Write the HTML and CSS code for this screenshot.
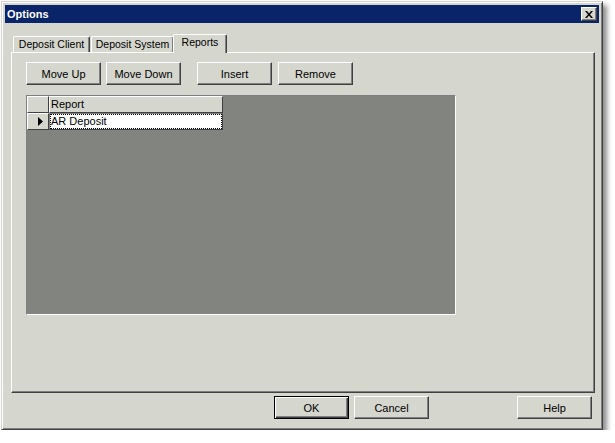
FILE: index.html
```html
<!DOCTYPE html>
<html lang="en">
<head>
    <meta charset="UTF-8">
    <title>Options</title>
    <link rel="stylesheet" href="styles.css">
</head>
<body>
    <div class="window">
        <div class="titlebar">
            <span class="title">Options</span>
            <div class="close-btn">
                <svg width="8" height="7" viewBox="0 0 8 7">
                    <path d="M0 0h2l2 2.5L6 0h2L5 3.5 8 7H6L4 4.5 2 7H0l3-3.5z" fill="#000"/>
                </svg>
            </div>
        </div>
        <div class="content">
            <div class="tabs">
                <div class="tab tab-client">Deposit Client</div>
                <div class="tab tab-system">Deposit System</div>
                <div class="tab tab-reports active">Reports</div>
            </div>
            <div class="panel">
                <div class="toolbar">
                    <button class="btn">Move Up</button>
                    <button class="btn">Move Down</button>
                    <button class="btn btn-insert">Insert</button>
                    <button class="btn btn-remove">Remove</button>
                </div>
                <div class="grid-area">
                    <div class="grid-table">
                        <div class="cell head"></div>
                        <div class="cell head">Report</div>
                        <div class="cell indicator">
                            <svg width="5" height="9" viewBox="0 0 5 9"><path d="M0 0l5 4.5L0 9z" fill="#000"/></svg>
                        </div>
                        <div class="cell data"><span class="focus">AR Deposit</span></div>
                    </div>
                </div>
            </div>
            <div class="footer">
                <button class="btn btn-default">OK</button>
                <button class="btn">Cancel</button>
                <button class="btn btn-help">Help</button>
            </div>
        </div>
    </div>
</body>
</html>
```

FILE: styles.css
```css
*{
    margin: 0;
    padding: 0;
    box-sizing: border-box;
}
body{
    background-color: #ffffff;
    font-family: "Liberation Sans", Arial, sans-serif;
    font-size: 11px;
    color: #000000;
}
.window{
    margin: 1px 0 0 1px;
    width: 602px;
    height: 429px;
    padding: 3px;
    background-color: #d5d6cd;
    border: 1px solid;
    border-color: #d5d6cd #404040 #404040 #d5d6cd;
    box-shadow: inset 1px 1px #ffffff, inset -1px -1px #808080, 4px 4px 5px rgba(0, 0, 0, 0.45);
}
.titlebar{
    height: 18px;
    background-color: #0a246a;
    display: flex;
    align-items: center;
    justify-content: space-between;
    padding: 0 2px 0 2px;
}
.title{
    color: #ffffff;
    font-weight: bold;
    font-size: 11px;
}
.close-btn{
    width: 16px;
    height: 14px;
    background-color: #d5d6cd;
    border: 1px solid;
    border-color: #ffffff #404040 #404040 #ffffff;
    box-shadow: inset -1px -1px #808080;
    display: flex;
    align-items: center;
    justify-content: center;
}
.content{
    padding: 11px 4px 0 6px;
}
.tabs{
    display: flex;
    align-items: flex-end;
    height: 18px;
    padding-left: 2px;
}
.tab{
    height: 16px;
    background-color: #d5d6cd;
    border: 1px solid;
    border-bottom: none;
    border-color: #ffffff #404040 #404040 #ffffff;
    border-radius: 2px 2px 0 0;
    box-shadow: inset -1px 0 #808080;
    text-align: center;
    line-height: 15px;
    font-size: 10.5px;
    white-space: nowrap;
}
.tab-client{
    width: 77px;
}
.tab-system{
    width: 83px;
    margin-left: 1px;
}
.tab-reports{
    width: 54px;
}
.tab.active{
    position: relative;
    z-index: 1;
    height: 19px;
    margin-bottom: -1px;
    margin-left: -1px;
    line-height: 15px;
}
.panel{
    height: 341px;
    border: 1px solid;
    border-color: #ffffff #404040 #404040 #ffffff;
    box-shadow: inset -1px -1px #808080;
    padding: 9px 0 0 14px;
}
.toolbar{
    display: flex;
}
.btn{
    width: 75px;
    height: 23px;
    font-family: "Liberation Sans", Arial, sans-serif;
    font-size: 11px;
    color: #000000;
    background-color: #d5d6cd;
    border: 1px solid;
    border-color: #ffffff #404040 #404040 #ffffff;
    box-shadow: inset -1px -1px #808080;
    margin-right: 5px;
}
.btn-insert{
    margin-left: 11px;
    margin-right: 6px;
}
.grid-area{
    margin-top: 10px;
    width: 430px;
    height: 220px;
    background-color: #828480;
    border: 1px solid;
    border-color: #808080 #ffffff #ffffff #808080;
}
.grid-table{
    display: grid;
    grid-template-columns: 22px 174px;
    grid-auto-rows: 17px;
    width: fit-content;
}
.cell{
    background-color: #d5d6cd;
    border: 1px solid;
    border-color: #ffffff #404040 #404040 #ffffff;
    padding-left: 1px;
    line-height: 14px;
    white-space: nowrap;
}
.indicator{
    display: flex;
    align-items: center;
    justify-content: flex-end;
    padding-right: 5px;
}
.cell.data{
    background-color: #ffffff;
    border-color: #808080 #404040 #404040 #808080;
    padding: 0;
}
.focus{
    display: block;
    height: 100%;
    outline: 1px dotted #000000;
    outline-offset: -1px;
    padding-left: 1px;
}
.footer{
    display: flex;
    margin-top: 3px;
    padding-left: 263px;
}
.btn-default{
    border: 1px solid #000000;
    box-shadow: inset 1px 1px #ffffff, inset -1px -1px #404040, inset -2px -2px #808080;
}
.btn-help{
    margin-left: 83px;
    margin-right: 0;
}
```
